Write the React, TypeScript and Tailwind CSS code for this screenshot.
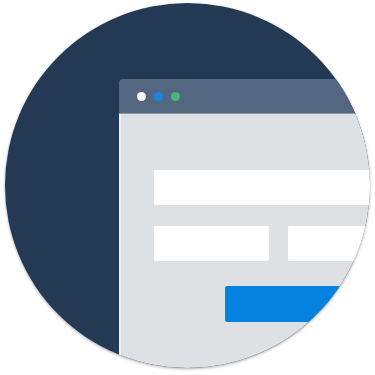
import React from "react";

export default function App() {
  return (
    <div className="w-[375px] h-[375px] bg-white pt-[3px] pl-[5px]">
      <div className="w-[365px] h-[365px] rounded-full overflow-hidden bg-[#233954] shadow-[0_1px_3px_rgba(0,0,0,0.35)] pl-[114px] pt-[76px]">
        <div className="w-[400px] flex flex-col rounded-tl-[4px] overflow-hidden">
          <div className="h-[35px] bg-[#546780] flex items-center gap-[8px] pl-[18px] border-b border-[#8a98a8]">
            <div className="w-[9px] h-[9px] rounded-full bg-white" />
            <div className="w-[9px] h-[9px] rounded-full bg-[#1b84e6]" />
            <div className="w-[9px] h-[9px] rounded-full bg-[#48b876]" />
          </div>
          <div className="h-[300px] bg-[#dee1e4] border-l-[2px] border-[#eef0f2] pl-[33px] pt-[56px] flex flex-col">
            <div className="w-[300px] h-[35px] bg-white rounded-[2px]" />
            <div className="flex gap-[19px] mt-[21px]">
              <div className="w-[115px] h-[35px] bg-white rounded-[2px]" />
              <div className="w-[150px] h-[35px] bg-white rounded-[2px]" />
            </div>
            <div className="ml-[71px] mt-[25px] w-[200px] h-[36px] bg-[#0582e0] rounded-[2px]" />
          </div>
        </div>
      </div>
    </div>
  );
}
